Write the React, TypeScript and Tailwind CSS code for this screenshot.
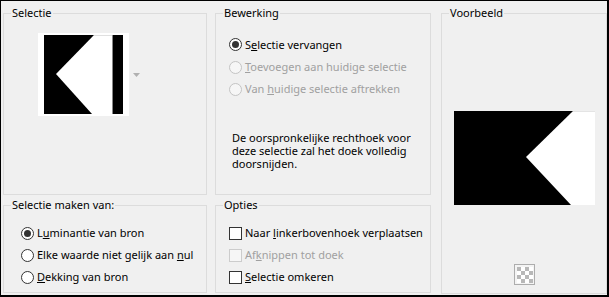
import React from 'react';

const font = "font-['Noto_Sans',sans-serif] text-[11px] leading-[16px]";

function Radio({ checked = false, disabled = false }: { checked?: boolean; disabled?: boolean }) {
    return (
        <span className={`w-[13px] h-[13px] rounded-full border flex items-center justify-center shrink-0 ${disabled ? 'border-[#c4c4c4] bg-[#f6f6f6]' : 'border-[#333333] bg-white'}`}>
            {checked && <span className="w-[7px] h-[7px] rounded-full bg-[#333333]" />}
        </span>
    );
}

function Check({ disabled = false }: { disabled?: boolean }) {
    return <span className={`w-[13px] h-[13px] border shrink-0 ${disabled ? 'border-[#cccccc] bg-[#f6f6f6]' : 'border-[#333333] bg-white'}`} />;
}

const Row = ({ control, children, disabled = false, h = 'h-[22px]' }: { control: React.ReactNode; children: React.ReactNode; disabled?: boolean; h?: string }) => (
    <div className={`flex items-center ${h} ${disabled ? 'text-[#a0a0a0]' : 'text-black'}`}>
        {control}
        <span className="ml-[3px] whitespace-nowrap">{children}</span>
    </div>
);

const Group = ({ title, className, children }: { title: string; className: string; children: React.ReactNode }) => (
    <fieldset className={`border border-[#dcdcdc] min-w-0 ${className}`}>
        <legend className="ml-[7px] px-[1px] text-black">{title}</legend>
        {children}
    </fieldset>
);

function Thumb() {
    return (
        <div className="bg-white w-[91px] h-[83px] px-[6px] py-[2px]">
            <svg width="79" height="79" viewBox="0 0 79 79">
                <rect width="79" height="79" fill="#000" />
                <polygon points="50,0 68,0 68,79 48,79 12,39" fill="#fff" />
                <rect x="68" y="0" width="1" height="79" fill="#888" />
                <rect x="50" y="0" width="18" height="1" fill="#e0e0e0" />
            </svg>
        </div>
    );
}

function Preview() {
    return (
        <svg width="141" height="94" viewBox="0 0 141 94">
            <rect width="141" height="94" fill="#000" />
            <polygon points="119,0 141,0 141,94 117,94 72,46" fill="#fff" />
            <rect x="119" y="0" width="22" height="1" fill="#e4e4e4" />
        </svg>
    );
}

function CheckerButton() {
    const cells = [];
    for (let r = 0; r < 4; r++)
        for (let c = 0; c < 4; c++)
            if ((r + c) % 2 === 0) cells.push(<rect key={`${r}-${c}`} x={3 + c * 4} y={3 + r * 4} width="4" height="4" fill="#b8b8b8" />);
    return (
        <svg width="21" height="21" viewBox="0 0 21 21">
            <rect x="0.5" y="0.5" width="20" height="20" fill="#f4f4f4" stroke="#adadad" />
            <rect x="3" y="3" width="16" height="16" fill="#fff" />
            {cells}
        </svg>
    );
}

export default function App() {
    return (
        <div className={`w-[609px] h-[297px] bg-[#f0f0f0] border-t border-l border-r-2 border-b-2 border-black flex pl-[2px] pt-[4px] ${font}`}>
            <div className="flex flex-col w-[204px]">
                <Group title="Selectie" className="h-[190px]">
                    <div className="flex items-center mt-[12px] ml-[34px]">
                        <Thumb />
                        <svg width="7" height="4" viewBox="0 0 7 4" className="ml-[4px]">
                            <polygon points="0,0 7,0 3.5,4" fill="#b0b0b0" />
                        </svg>
                    </div>
                </Group>
                <Group title="Selectie maken van:" className="h-[96px] mt-[2px]">
                    <div className="mt-[9px] ml-[17px]">
                        <Row control={<Radio checked />}>L<span className="underline">u</span>minantie van bron</Row>
                        <Row control={<Radio />}>Elke waarde niet gelijk aan <span className="underline">n</span>ul</Row>
                        <Row control={<Radio />}><span className="underline">D</span>ekking van bron</Row>
                    </div>
                </Group>
            </div>
            <div className="flex flex-col w-[216px] ml-[8px]">
                <Group title="Bewerking" className="h-[190px]">
                    <div className="mt-[12px] ml-[13px]">
                        <Row control={<Radio checked />} h="h-[23px]">S<span className="underline">e</span>lectie vervangen</Row>
                        <Row control={<Radio disabled />} disabled>
                            <span className="underline">T</span>oevoegen aan huidige selectie
                        </Row>
                        <Row control={<Radio disabled />} disabled>
                            Van <span className="underline">h</span>uidige selectie aftrekken
                        </Row>
                    </div>
                    <p className="mt-[31px] ml-[16px] w-[186px] leading-[13px] text-black">
                        De oorspronkelijke rechthoek voor deze selectie zal het doek volledig doorsnijden.
                    </p>
                </Group>
                <Group title="Opties" className="h-[96px] mt-[2px]">
                    <div className="mt-[9px] ml-[13px]">
                        <Row control={<Check />}>Naar <span className="underline">l</span>inkerbovenhoek verplaatsen</Row>
                        <Row control={<Check disabled />} disabled>Af<span className="underline">k</span>nippen tot doek</Row>
                        <Row control={<Check />}><span className="underline">S</span>electie omkeren</Row>
                    </div>
                </Group>
            </div>
            <Group title="Voorbeeld" className="w-[166px] h-[289px] ml-[10px] flex flex-col items-center">
                <div className="mt-[90px]">
                    <Preview />
                </div>
                <div className="mt-[59px]">
                    <CheckerButton />
                </div>
            </Group>
        </div>
    );
}
